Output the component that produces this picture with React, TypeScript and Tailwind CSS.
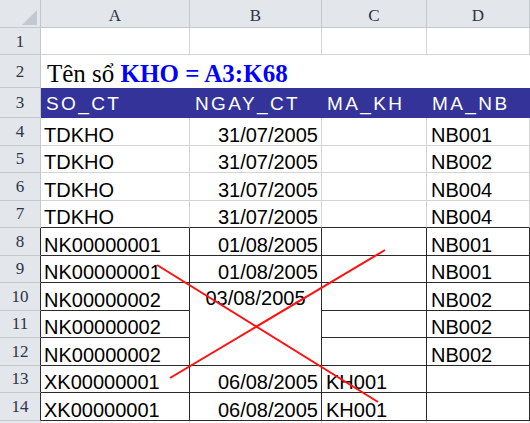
import React from "react";

type Row = { n: number; a: string; b: string; c: string; d: string };

const lightRows: Row[] = [
  { n: 4, a: "TDKHO", b: "31/07/2005", c: "", d: "NB001" },
  { n: 5, a: "TDKHO", b: "31/07/2005", c: "", d: "NB002" },
  { n: 6, a: "TDKHO", b: "31/07/2005", c: "", d: "NB004" },
  { n: 7, a: "TDKHO", b: "31/07/2005", c: "", d: "NB004" },
];

const HDR = "bg-[#e3e6ea] border-[#c3c8cf]";
const sans = { fontFamily: '"Liberation Sans", Arial, sans-serif' };
const serif = { fontFamily: '"Liberation Serif", "Times New Roman", serif' };

function RowHead({ n, dark }: { n?: number; dark?: boolean }) {
  return (
    <div
      className={`${HDR} border-b border-r flex items-center justify-center text-[17px] leading-none text-[#2b3448] ${
        dark ? "border-r-[#2b2b2b]" : ""
      }`}
      style={serif}
    >
      {n}
    </div>
  );
}

function Cell({
  children,
  className = "",
}: {
  children?: React.ReactNode;
  className?: string;
}) {
  return (
    <div
      className={`flex items-end text-[20px] leading-[20px] text-black whitespace-nowrap overflow-visible ${className}`}
      style={sans}
    >
      {children}
    </div>
  );
}

export default function App() {
  const light = "border-r border-b border-[#d4d4d4]";
  const lightDarkBottom = "border-r border-b border-r-[#d4d4d4] border-b-[#2b2b2b]";
  const dark = "border-r border-b border-[#2b2b2b]";

  return (
    <div className="relative w-[530px] h-[423px] overflow-hidden bg-white">
      <div
        className="grid"
        style={{
          gridTemplateColumns: "41px 149px 132px 105px 103px",
          gridTemplateRows: "28px 27px 33px 30px repeat(12, 27.5px)",
        }}
      >
        {/* column header row */}
        <div className={`${HDR} border-b border-r relative`}>
          <svg className="absolute inset-0" width="41" height="28">
            <polygon points="37,10 37,25 22,25" fill="#c4c9d0" />
          </svg>
        </div>
        {["A", "B", "C", "D"].map((l) => (
          <div
            key={l}
            className={`${HDR} border-b border-r flex items-end justify-center pb-[3px] text-[17px] leading-[17px] text-[#2b3448]`}
            style={serif}
          >
            {l}
          </div>
        ))}

        {/* row 1 */}
        <RowHead n={1} />
        <Cell className={light} />
        <Cell className={light} />
        <Cell className={light} />
        <Cell className={light} />

        {/* row 2 */}
        <RowHead n={2} />
        <div
          className="col-span-4 flex items-end pb-[2px] pl-[6px] text-[25px] leading-[25px] text-black whitespace-nowrap"
          style={serif}
        >
          <span>Tên sổ&nbsp;</span>
          <span className="font-bold text-[#0000ff]">KHO = A3:K68</span>
        </div>

        {/* row 3 header */}
        <RowHead n={3} />
        {["SO_CT", "NGAY_CT", "MA_KH", "MA_NB"].map((h) => (
          <div
            key={h}
            className="bg-[#333399] flex items-center pl-[5px] text-white text-[19px] leading-[19px] tracking-[2.4px] whitespace-nowrap"
            style={sans}
          >
            {h}
          </div>
        ))}

        {/* rows 4-7 */}
        {lightRows.map((r, i) => {
          const cls = i === 3 ? lightDarkBottom : light;
          const dr = i === 3 ? "border-r-[#2b2b2b]" : "";
          return (
            <React.Fragment key={r.n}>
              <RowHead n={r.n} />
              <Cell className={`${cls} pl-[3px] ${dr}`}>{r.a}</Cell>
              <Cell className={`${cls} justify-end pr-[3px] ${dr}`}>{r.b}</Cell>
              <Cell className={`${cls} pl-[4px] ${dr}`}>{r.c}</Cell>
              <Cell className={`${cls} pl-[4px]`}>{r.d}</Cell>
            </React.Fragment>
          );
        })}

        {/* row 8 */}
        <RowHead n={8} dark />
        <Cell className={`${dark} pl-[3px]`}>NK00000001</Cell>
        <Cell className={`${dark} justify-end pr-[3px]`}>01/08/2005</Cell>
        <Cell className={dark} />
        <Cell className={`${dark} pl-[4px]`}>NB001</Cell>

        {/* row 9 */}
        <RowHead n={9} dark />
        <Cell className={`${dark} pl-[3px]`}>NK00000001</Cell>
        <Cell className={`${dark} justify-end pr-[3px]`}>01/08/2005</Cell>
        <Cell className={dark} />
        <Cell className={`${dark} pl-[4px]`}>NB001</Cell>

        {/* row 10 with merged B10:B12 */}
        <RowHead n={10} dark />
        <Cell className={`${dark} pl-[3px]`}>NK00000002</Cell>
        <div
          className={`${dark} row-span-3 flex justify-center items-start pt-[5px] text-[20px] leading-[20px] text-black`}
          style={sans}
        >
          03/08/2005
        </div>
        <Cell className={dark} />
        <Cell className={`${dark} pl-[4px]`}>NB002</Cell>

        {/* row 11 */}
        <RowHead n={11} dark />
        <Cell className={`${dark} pl-[3px]`}>NK00000002</Cell>
        <Cell className={dark} />
        <Cell className={`${dark} pl-[4px]`}>NB002</Cell>

        {/* row 12 */}
        <RowHead n={12} dark />
        <Cell className={`${dark} pl-[3px]`}>NK00000002</Cell>
        <Cell className={dark} />
        <Cell className={`${dark} pl-[4px]`}>NB002</Cell>

        {/* row 13 */}
        <RowHead n={13} dark />
        <Cell className={`${dark} pl-[3px]`}>XK00000001</Cell>
        <Cell className={`${dark} justify-end pr-[3px]`}>06/08/2005</Cell>
        <Cell className={`${dark} pl-[4px]`}>KH001</Cell>
        <Cell className={dark} />

        {/* row 14 */}
        <RowHead n={14} dark />
        <Cell className={`${dark} pl-[3px]`}>XK00000001</Cell>
        <Cell className={`${dark} justify-end pr-[3px]`}>06/08/2005</Cell>
        <Cell className={`${dark} pl-[4px]`}>KH001</Cell>
        <Cell className={dark} />

        {/* row 15 (cut off below the window) */}
        <RowHead />
        <Cell className={light} />
        <Cell className={light} />
        <Cell className={light} />
        <Cell className={light} />
      </div>

      {/* red X drawn over the table */}
      <svg
        className="absolute inset-0 pointer-events-none"
        width="530"
        height="423"
      >
        <line x1="157" y1="265" x2="378" y2="402" stroke="#ff1010" strokeWidth="2" />
        <line x1="170" y1="378" x2="385" y2="250" stroke="#ff1010" strokeWidth="2" />
      </svg>
    </div>
  );
}
